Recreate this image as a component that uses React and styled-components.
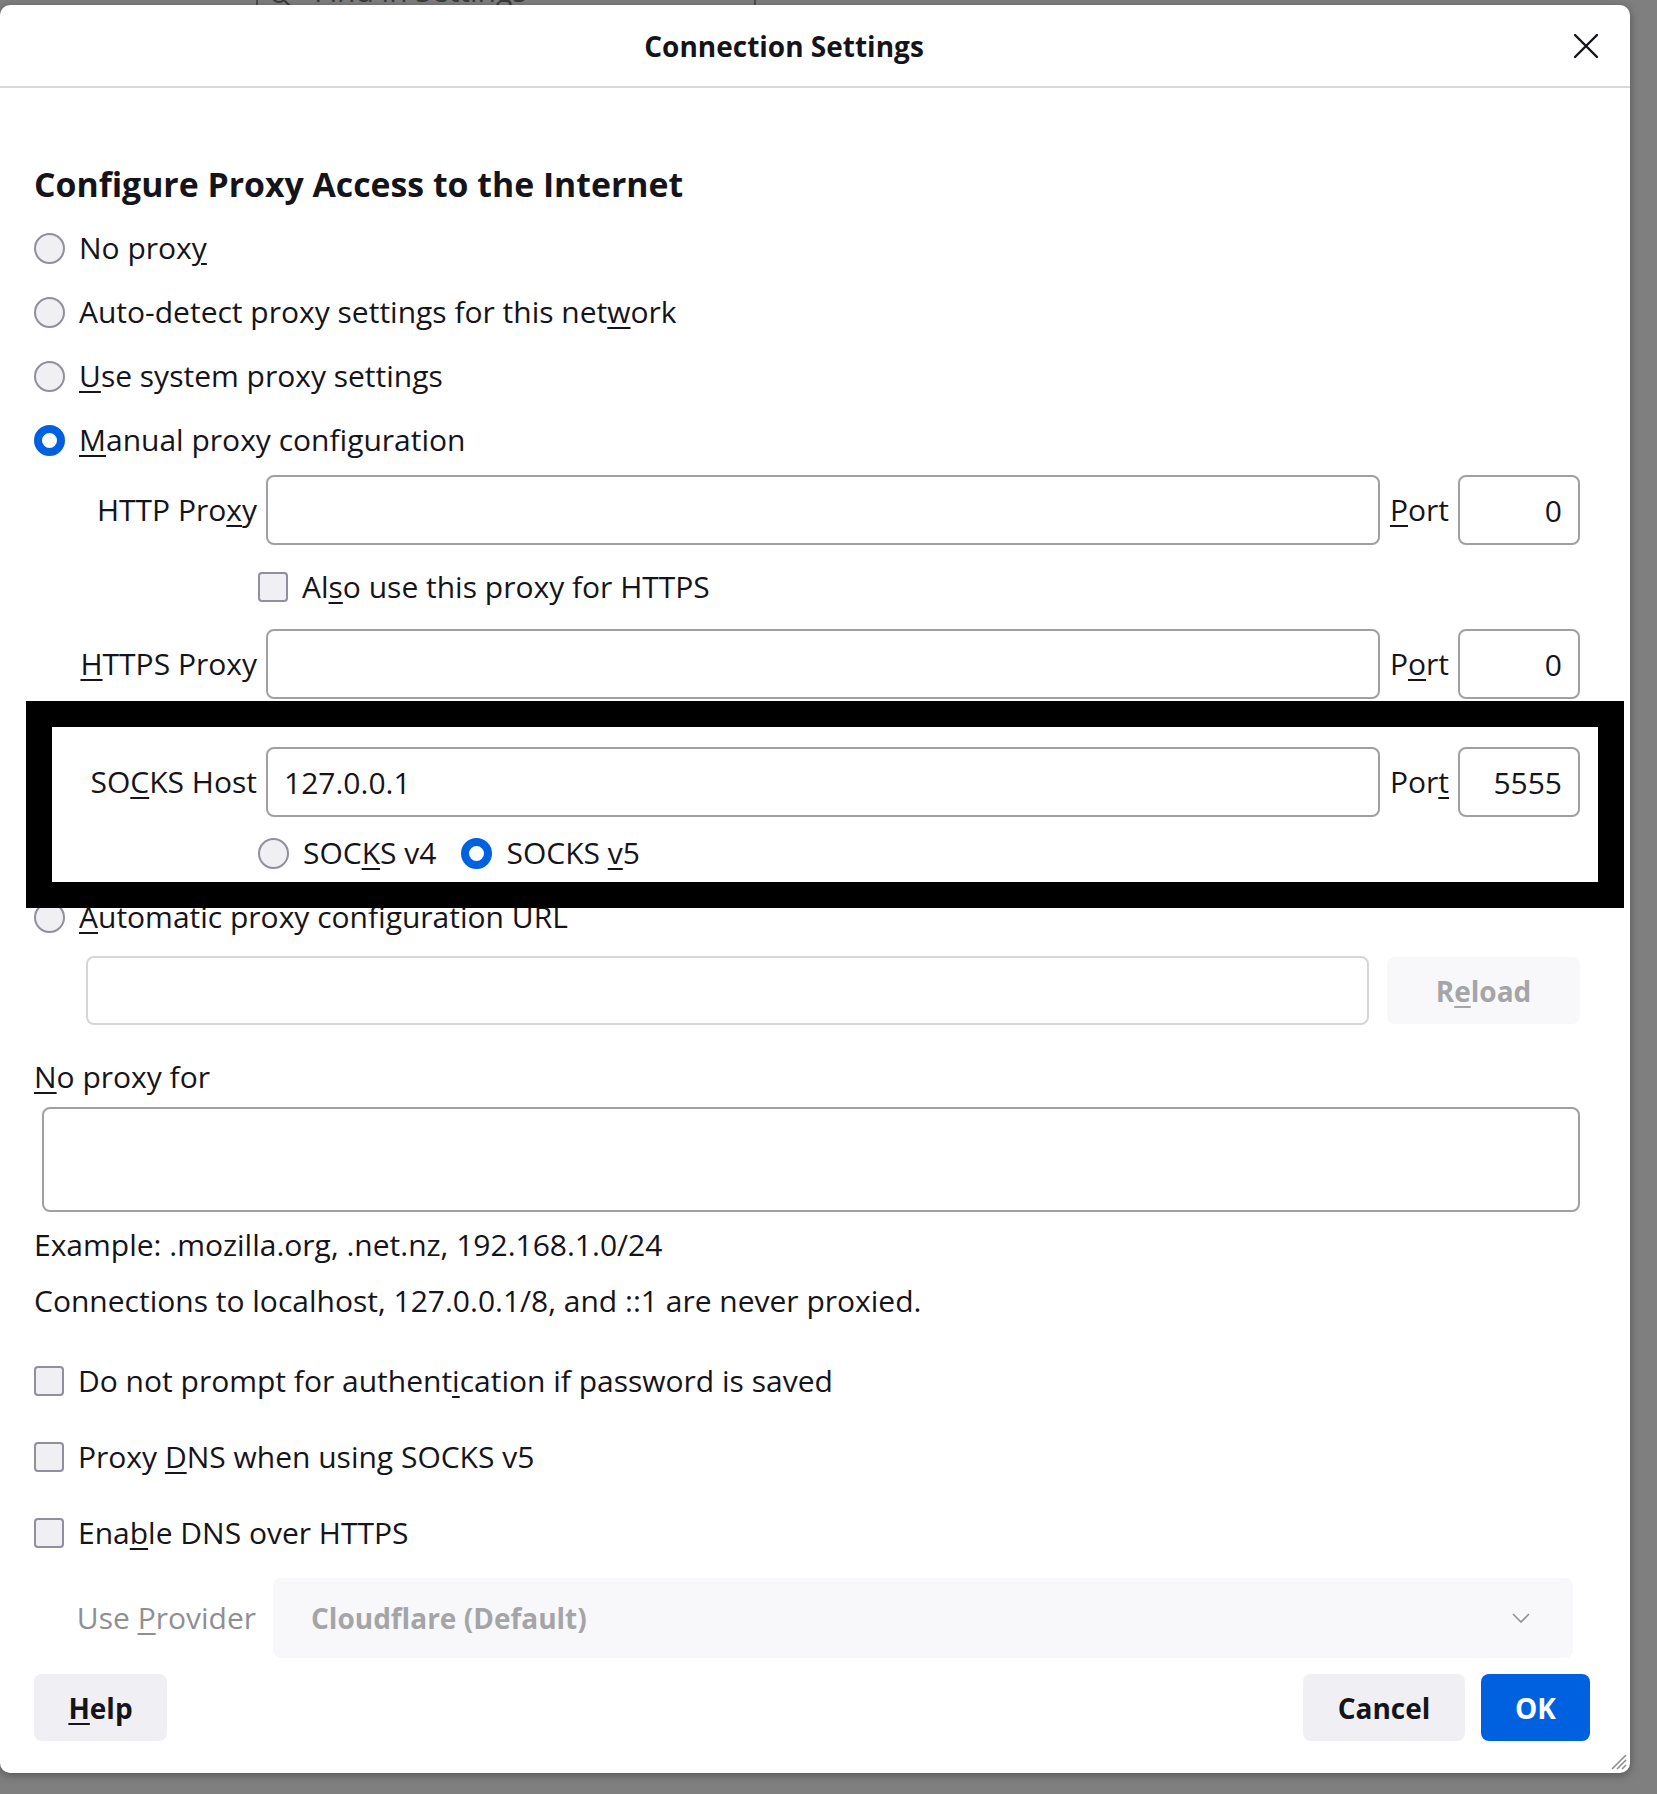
import React from 'react';
import styled, { createGlobalStyle } from 'styled-components';

const GlobalStyle = createGlobalStyle`
  html, body { margin: 0; padding: 0; background: #7f7f7f; }
  body { font-family: "Open Sans", "Noto Sans", sans-serif; color: #15141a; }
  *, *::before, *::after { box-sizing: border-box; }
`;

const FONT = `"Open Sans", "Noto Sans", sans-serif`;
const TEXT = '#15141a';
const BLUE = '#0061e0';

const Page = styled.div`
  width: 1657px;
  height: 1794px;
  background: #7f7f7f;
  overflow: hidden;
`;

const BehindStrip = styled.div`
  height: 5px;
  overflow: hidden;
  padding-left: 256px;
`;

const BehindSearch = styled.div`
  width: 500px;
  height: 5px;
  border-left: 2px solid #505050;
  border-right: 2px solid #505050;
  display: flex;
  gap: 22px;
  padding-left: 12px;
  overflow: hidden;
`;

const BehindText = styled.span`
  display: block;
  font-size: 30px;
  line-height: 40px;
  margin-top: -29px;
  color: #3c3c3c;
  white-space: nowrap;
`;

const BehindIcon = styled.svg`
  flex: none;
  margin-top: -14px;
`;

const Dialog = styled.div`
  position: relative;
  width: 1630px;
  background: #fff;
  border-radius: 10px;
  box-shadow: 0 2px 10px rgba(0, 0, 0, 0.35);
  display: flex;
  flex-direction: column;
`;

const Header = styled.header`
  height: 83px;
  border-bottom: 2px solid #d8d8dc;
  display: flex;
  align-items: center;
`;

const Title = styled.h1`
  flex: 1;
  margin: 0;
  padding-left: 6px;
  text-align: center;
  font-size: 28px;
  font-weight: 700;
  line-height: 40px;
  color: ${TEXT};
`;

const CloseButton = styled.button`
  flex: none;
  margin-right: 20px;
  width: 48px;
  height: 48px;
  border: 0;
  padding: 0;
  background: transparent;
  display: flex;
  align-items: center;
  justify-content: center;
`;

const Body = styled.div`
  display: flex;
  flex-direction: column;
  padding: 0 50px 32px 34px;
`;

const Heading = styled.h2`
  margin: 74px 0 0;
  font-size: 33.8px;
  font-weight: 700;
  line-height: 44px;
  color: ${TEXT};
`;

const Key = styled.span`
  text-decoration: underline;
  text-decoration-thickness: 2px;
  text-underline-offset: 4px;
`;

const OptionRow = styled.label`
  display: flex;
  align-items: center;
  gap: 14px;
  height: ${(p) => p.$h || 64}px;
  margin-top: ${(p) => p.$mt || 0}px;
  padding-left: ${(p) => p.$indent || 0}px;
  font-size: 30px;
  line-height: 40px;
  white-space: nowrap;
`;

const RadioGroup = styled.div`
  display: flex;
  flex-direction: column;
  margin-top: 10px;
`;

const Radio = styled.span`
  flex: none;
  width: 31px;
  height: 31px;
  border-radius: 50%;
  background: ${(p) => (p.$checked ? '#fff' : '#f0f0f4')};
  border: ${(p) => (p.$checked ? `8.5px solid ${BLUE}` : '2px solid #8f8f9d')};
`;

const Checkbox = styled.span`
  flex: none;
  width: 30px;
  height: 30px;
  border-radius: 4px;
  background: #f0f0f4;
  border: 2px solid #8f8f9d;
`;

const FieldRow = styled.div`
  display: flex;
  align-items: center;
  height: 70px;
  margin-top: ${(p) => p.$mt || 0}px;
  font-size: 30px;
  line-height: 40px;
`;

const FieldLabel = styled.label`
  width: 223px;
  flex: none;
  text-align: right;
  white-space: nowrap;
  margin-right: 9px;
`;

const TextInput = styled.input`
  flex: ${(p) => (p.$port ? 'none' : '1')};
  width: ${(p) => (p.$port ? '122px' : 'auto')};
  min-width: 0;
  height: 70px;
  border: 2px solid #a0a0a3;
  border-radius: 8px;
  padding: 0 16px;
  font-family: ${FONT};
  font-size: 30px;
  color: ${TEXT};
  background: #fff;
  text-align: ${(p) => (p.$port ? 'right' : 'left')};
  outline: none;
`;

const PortLabel = styled.label`
  flex: none;
  margin: 0 9px 0 10px;
  white-space: nowrap;
`;

const SocksSection = styled.div`
  position: relative;
  padding-top: 48px;

  &::after {
    content: '';
    position: absolute;
    top: 2px;
    left: -8px;
    right: -44px;
    bottom: -19px;
    border: 26px solid #000;
    pointer-events: none;
    z-index: 2;
  }
`;

const VersionRow = styled.div`
  display: flex;
  align-items: center;
  height: 72px;
  padding-left: 224px;
  gap: 25px;
`;

const UrlRow = styled.div`
  display: flex;
  align-items: center;
  gap: 18px;
  margin-top: 11px;
  height: 69px;
  padding-left: 52px;
`;

const UrlInput = styled.input`
  flex: 1;
  height: 69px;
  border: 2px solid #d6d6d8;
  border-radius: 8px;
  background: #fff;
  outline: none;
`;

const GhostButton = styled.button`
  flex: none;
  width: 193px;
  height: 67px;
  border: 0;
  border-radius: 8px;
  background: #f8f8fa;
  color: #a5a5a8;
  font-family: ${FONT};
  font-size: 28px;
  font-weight: 700;
`;

const Caption = styled.div`
  margin-top: ${(p) => p.$mt || 0}px;
  font-size: 30px;
  line-height: ${(p) => p.$lh || 40}px;
  white-space: nowrap;
`;

const TextArea = styled.textarea`
  display: block;
  margin: 14px 0 0 8px;
  width: calc(100% - 8px);
  height: 105px;
  border: 2px solid #a0a0a3;
  border-radius: 8px;
  resize: none;
  outline: none;
  font-family: ${FONT};
`;

const CheckGroup = styled.div`
  display: flex;
  flex-direction: column;
  margin-top: 22px;
`;

const ProviderRow = styled.div`
  display: flex;
  align-items: center;
  margin-top: 7px;
  height: 80px;
  font-size: 30px;
  line-height: 40px;
`;

const ProviderLabel = styled.label`
  width: 222px;
  flex: none;
  text-align: right;
  color: #8f8f93;
  margin-right: 17px;
  white-space: nowrap;
`;

const SelectBox = styled.div`
  flex: 1;
  margin-right: 7px;
  height: 80px;
  border-radius: 8px;
  background: #f8f8fa;
  display: flex;
  align-items: center;
  justify-content: space-between;
  padding: 0 43px 0 38px;
  color: #a5a5a8;
  font-size: 28px;
  font-weight: 700;
`;

const ButtonRow = styled.div`
  display: flex;
  align-items: center;
  margin-top: 16px;
  margin-right: -10px;
  gap: 16px;
`;

const Spacer = styled.div`
  flex: 1;
`;

const Button = styled.button`
  flex: none;
  width: ${(p) => p.$w}px;
  height: 67px;
  border: 0;
  border-radius: 8px;
  background: ${(p) => (p.$primary ? BLUE : '#f0f0f4')};
  color: ${(p) => (p.$primary ? '#fff' : TEXT)};
  font-family: ${FONT};
  font-size: 28px;
  font-weight: 700;
  padding: 0;
`;

const Grip = styled.svg`
  position: absolute;
  right: 3px;
  bottom: 3px;
`;

export default function App() {
  return (
    <>
      <GlobalStyle />
      <Page>
        <BehindStrip>
          <BehindSearch>
            <BehindIcon width="22" height="22" viewBox="0 0 22 22">
              <circle cx="9" cy="9" r="7" fill="none" stroke="#3c3c3c" strokeWidth="2" />
              <line x1="14" y1="14" x2="20" y2="20" stroke="#3c3c3c" strokeWidth="2" />
            </BehindIcon>
            <BehindText>Find in Settings</BehindText>
          </BehindSearch>
        </BehindStrip>
        <Dialog>
          <Header>
            <Title>Connection Settings</Title>
            <CloseButton aria-label="Close">
              <svg width="24" height="24" viewBox="0 0 24 24">
                <path d="M1 1 L23 23 M23 1 L1 23" stroke={TEXT} strokeWidth="2.4" strokeLinecap="round" />
              </svg>
            </CloseButton>
          </Header>
          <Body>
            <Heading>Configure Proxy Access to the Internet</Heading>
            <RadioGroup>
              <OptionRow>
                <Radio />
                <span>No prox<Key>y</Key></span>
              </OptionRow>
              <OptionRow>
                <Radio />
                <span>Auto-detect proxy settings for this net<Key>w</Key>ork</span>
              </OptionRow>
              <OptionRow>
                <Radio />
                <span><Key>U</Key>se system proxy settings</span>
              </OptionRow>
              <OptionRow>
                <Radio $checked />
                <span><Key>M</Key>anual proxy configuration</span>
              </OptionRow>
            </RadioGroup>

            <FieldRow $mt={3}>
              <FieldLabel>HTTP Pro<Key>x</Key>y</FieldLabel>
              <TextInput readOnly value="" />
              <PortLabel><Key>P</Key>ort</PortLabel>
              <TextInput $port readOnly value="0" />
            </FieldRow>
            <OptionRow $h={84} $indent={224}>
              <Checkbox />
              <span>Al<Key>s</Key>o use this proxy for HTTPS</span>
            </OptionRow>
            <FieldRow>
              <FieldLabel><Key>H</Key>TTPS Proxy</FieldLabel>
              <TextInput readOnly value="" />
              <PortLabel>P<Key>o</Key>rt</PortLabel>
              <TextInput $port readOnly value="0" />
            </FieldRow>

            <SocksSection>
              <FieldRow>
                <FieldLabel>SO<Key>C</Key>KS Host</FieldLabel>
                <TextInput readOnly value="127.0.0.1" />
                <PortLabel>Por<Key>t</Key></PortLabel>
                <TextInput $port readOnly value="5555" />
              </FieldRow>
              <VersionRow>
                <OptionRow as="span" $h={72}>
                  <Radio />
                  <span>SOC<Key>K</Key>S v4</span>
                </OptionRow>
                <OptionRow as="span" $h={72}>
                  <Radio $checked />
                  <span>SOCKS <Key>v</Key>5</span>
                </OptionRow>
              </VersionRow>
            </SocksSection>

            <OptionRow $h={56}>
              <Radio />
              <span><Key>A</Key>utomatic proxy configuration URL</span>
            </OptionRow>
            <UrlRow>
              <UrlInput readOnly disabled />
              <GhostButton disabled>R<Key>e</Key>load</GhostButton>
            </UrlRow>

            <Caption $mt={36} $lh={32}><Key>N</Key>o proxy for</Caption>
            <TextArea readOnly value="" />
            <Caption $mt={13}>Example: .mozilla.org, .net.nz, 192.168.1.0/24</Caption>
            <Caption $mt={16}>Connections to localhost, 127.0.0.1/8, and ::1 are never proxied.</Caption>

            <CheckGroup>
              <OptionRow $h={76}>
                <Checkbox />
                <span>Do not prompt for authent<Key>i</Key>cation if password is saved</span>
              </OptionRow>
              <OptionRow $h={76}>
                <Checkbox />
                <span>Proxy <Key>D</Key>NS when using SOCKS v5</span>
              </OptionRow>
              <OptionRow $h={76}>
                <Checkbox />
                <span>Ena<Key>b</Key>le DNS over HTTPS</span>
              </OptionRow>
            </CheckGroup>

            <ProviderRow>
              <ProviderLabel>Use <Key>P</Key>rovider</ProviderLabel>
              <SelectBox>
                <span>Cloudflare (Default)</span>
                <svg width="18" height="10" viewBox="0 0 18 10">
                  <path d="M1 1 L9 9 L17 1" fill="none" stroke="#8f8f9d" strokeWidth="1.6" />
                </svg>
              </SelectBox>
            </ProviderRow>

            <ButtonRow>
              <Button $w={133}><Key>H</Key>elp</Button>
              <Spacer />
              <Button $w={162}>Cancel</Button>
              <Button $w={109} $primary>OK</Button>
            </ButtonRow>
          </Body>
          <Grip width="18" height="18" viewBox="0 0 18 18">
            <path d="M17 3 L3 17 M17 8 L8 17 M17 13 L13 17" stroke="#8a8a8e" strokeWidth="1.5" />
          </Grip>
        </Dialog>
      </Page>
    </>
  );
}
